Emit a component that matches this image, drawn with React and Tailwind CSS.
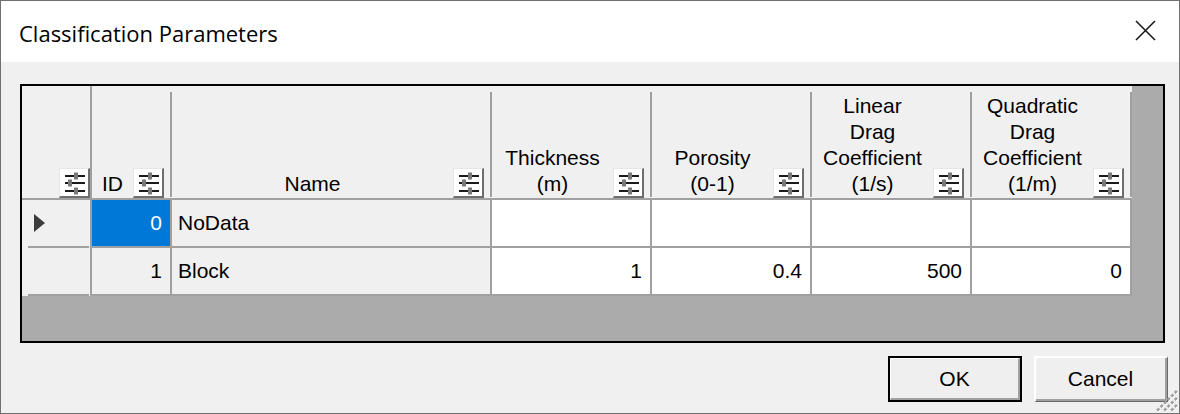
import React from "react";

function FilterIcon() {
  return (
    <div className="w-[31px] h-[30px] shrink-0 bg-white border-t border-l border-t-[#e6e6e6] border-l-[#e6e6e6] border-r-2 border-b-2 border-r-[#6e6e6e] border-b-[#6e6e6e]">
      <svg width="28" height="27" viewBox="0 0 28 27" className="block">
        <rect x="5" y="6" width="20" height="2" fill="#1a1a1a" />
        <rect x="5" y="13" width="20" height="2" fill="#1a1a1a" />
        <rect x="5" y="21" width="20" height="2" fill="#1a1a1a" />
        <rect x="14" y="3.5" width="4" height="7" fill="#7a7a7a" />
        <rect x="8" y="10.5" width="4" height="7" fill="#7a7a7a" />
        <rect x="14" y="18.5" width="4" height="7" fill="#7a7a7a" />
      </svg>
    </div>
  );
}

function HeaderCell({ w, lines }) {
  return (
    <div className={`${w} h-[114px] shrink-0 bg-[#f0f0f0] border-b-2 border-[#a0a0a0] flex`}>
      <div className="flex-1 flex items-end">
        <div className="flex-1 text-center leading-[26px] pb-[1px] text-black">
          {lines.map((l, i) => (
            <div key={i}>{l}</div>
          ))}
        </div>
        <div className="mr-[6px]">
          <FilterIcon />
        </div>
      </div>
      <div className="w-[2px] bg-[#a0a0a0] mt-[6px] mb-[1px]" />
    </div>
  );
}

function RowHead({ active }) {
  return (
    <div className="w-[70px] h-[48px] shrink-0 bg-[#f0f0f0] border-r-2 border-[#a0a0a0] flex flex-col">
      <div className="flex-1 flex items-center pl-[12px]">
        {active && (
          <svg width="11" height="18" viewBox="0 0 11 18" className="block">
            <polygon points="0,0 11,9 0,18" fill="#3c3c3c" />
          </svg>
        )}
      </div>
      <div className="h-[2px] ml-[6px] mr-[1px] bg-[#a0a0a0]" />
    </div>
  );
}

function Cell({ w, bg, align, color, children }) {
  return (
    <div
      className={`${w} ${bg} h-[48px] shrink-0 border-r-2 border-b-2 border-[#a0a0a0] flex items-center ${
        align === "right" ? "justify-end pr-[8px]" : "justify-start pl-[6px]"
      } ${color || "text-black"}`}
    >
      {children}
    </div>
  );
}

export default function App() {
  const rows = [
    { id: "0", name: "NoData", vals: ["", "", "", ""], active: true },
    { id: "1", name: "Block", vals: ["1", "0.4", "500", "0"], active: false },
  ];
  return (
    <div className="relative w-[1180px] h-[414px] border border-[#707070] bg-[#f0f0f0] flex flex-col font-['Liberation_Sans',Arial,sans-serif] text-[21px] overflow-hidden">
      {/* Title bar */}
      <div className="h-[61px] shrink-0 bg-white flex items-center justify-between pl-[18px] pr-[23px]">
        <div className="font-['Open_Sans',sans-serif] text-[22px] text-black pt-[3px]">
          Classification Parameters
        </div>
        <svg width="21" height="21" viewBox="0 0 21 21" className="block mb-[2px]">
          <path d="M1 1 L20 20 M20 1 L1 20" stroke="#1a1a1a" strokeWidth="1.6" />
        </svg>
      </div>

      {/* Body */}
      <div className="flex-1 flex flex-col pl-[19px] pt-[22px]">
        <div className="w-[1145px] h-[259px] border-2 border-black bg-[#ababab] flex flex-col">
          {/* Header */}
          <div className="flex">
            <div className="w-[70px] h-[114px] shrink-0 bg-[#f0f0f0] border-b-2 border-r-2 border-[#a0a0a0] flex items-end justify-end">
              <FilterIcon />
            </div>
            <HeaderCell w="w-[80px]" lines={["ID"]} />
            <HeaderCell w="w-[320px]" lines={["Name"]} />
            <HeaderCell w="w-[160px]" lines={["Thickness", "(m)"]} />
            <HeaderCell w="w-[160px]" lines={["Porosity", "(0-1)"]} />
            <HeaderCell w="w-[160px]" lines={["Linear", "Drag", "Coefficient", "(1/s)"]} />
            <HeaderCell w="w-[160px]" lines={["Quadratic", "Drag", "Coefficient", "(1/m)"]} />
          </div>
          {/* Rows */}
          {rows.map((r, i) => (
            <div key={i} className="flex">
              <RowHead active={r.active} />
              <Cell
                w="w-[80px]"
                bg={r.active ? "bg-[#0078d7]" : "bg-[#f0f0f0]"}
                align="right"
                color={r.active ? "text-white" : "text-black"}
              >
                {r.id}
              </Cell>
              <Cell w="w-[320px]" bg="bg-[#f0f0f0]" align="left">
                {r.name}
              </Cell>
              {r.vals.map((v, j) => (
                <Cell key={j} w="w-[160px]" bg="bg-white" align="right">
                  {v}
                </Cell>
              ))}
            </div>
          ))}
        </div>

        {/* Buttons */}
        <div className="flex justify-end gap-[12px] pr-[11px] mt-[13px]">
          <button className="w-[134px] h-[46px] border-2 border-black bg-[#e1e1e1] flex items-center justify-center text-black text-[21px] font-['Liberation_Sans',Arial,sans-serif]">
            <div className="w-full h-full flex items-center justify-center bg-[#efefef] border-t border-l border-t-white border-l-white border-r-2 border-b-2 border-r-[#a0a0a0] border-b-[#a0a0a0]">
              OK
            </div>
          </button>
          <button className="w-[134px] h-[46px] bg-[#efefef] border-t-2 border-l-2 border-t-white border-l-white border-r border-b border-r-[#696969] border-b-[#696969] flex text-black text-[21px] font-['Liberation_Sans',Arial,sans-serif]">
            <div className="w-full h-full flex items-center justify-center border-r-2 border-b-2 border-r-[#a0a0a0] border-b-[#a0a0a0]">
              Cancel
            </div>
          </button>
        </div>
      </div>

      {/* Resize grip */}
      <svg width="28" height="28" viewBox="0 0 28 28" className="absolute right-0 bottom-0 block">
        <path d="M26 6 L6 26 M26 13 L13 26 M26 20 L20 26" stroke="#a0a0a0" strokeWidth="3" strokeDasharray="3 2" />
        <path d="M27 7 L7 27 M27 14 L14 27 M27 21 L21 27" stroke="#ffffff" strokeWidth="1" strokeDasharray="3 2" />
      </svg>
    </div>
  );
}
